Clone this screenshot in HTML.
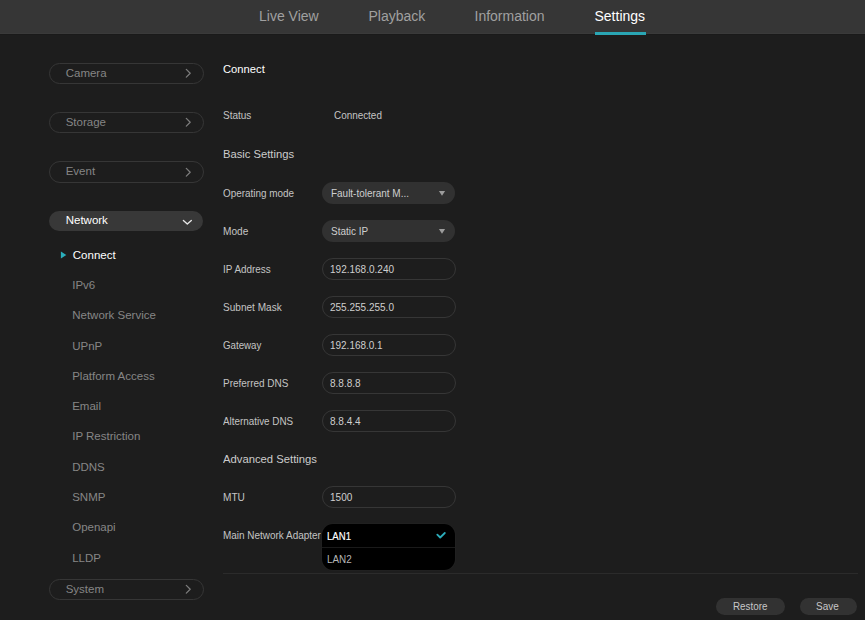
<!DOCTYPE html>
<html><head><meta charset="utf-8">
<style>
*{margin:0;padding:0;box-sizing:border-box}
html,body{width:865px;height:620px;overflow:hidden;background:#1d1d1d;font-family:"Liberation Sans",sans-serif}
.a{position:absolute}
.t{position:absolute;line-height:1;white-space:nowrap}
.pill{position:absolute;left:48.6px;width:155px;height:21.4px;border:1px solid #363636;border-radius:11px}
.sel{position:absolute;left:322px;width:133px;height:22px;background:#313131;border-radius:11px}
.inp{position:absolute;left:322px;width:134px;height:22px;border:1px solid #363636;border-radius:11px}
.btn{position:absolute;top:597.5px;height:17.5px;background:#323232;border-radius:9px}
</style></head><body>
<div class="a" style="left:0;top:0;width:865px;height:34px;background:#363636;border-bottom:1px solid #3a3a3a"></div><div class="a" style="left:0;top:34px;width:865px;height:1px;background:#1a1a1a"></div>
<div class="t" style="left:259px;top:9px;font-size:14px;color:#a0a0a0;letter-spacing:0px;font-weight:normal;">Live View</div>
<div class="t" style="left:368.5px;top:9px;font-size:14px;color:#a0a0a0;letter-spacing:0px;font-weight:normal;">Playback</div>
<div class="t" style="left:474.5px;top:9px;font-size:14px;color:#a0a0a0;letter-spacing:0px;font-weight:normal;">Information</div>
<div class="t" style="left:594.5px;top:9px;font-size:14px;color:#ffffff;letter-spacing:0px;font-weight:normal;">Settings</div>
<div class="a" style="left:595px;top:32px;width:51px;height:2.5px;background:#2aa6b4"></div>
<div class="pill" style="top:62.6px"></div>
<div class="t" style="left:65.7px;top:67.6px;font-size:11.5px;color:#858585;letter-spacing:0px;font-weight:normal;">Camera</div>
<svg class="a" style="left:185px;top:68.0px" width="10" height="12" viewBox="0 0 10 12"><path d="M1.3 1.4 L5.2 5.3 L1.3 9.1" fill="none" stroke="#7d7d7d" stroke-width="1.25" stroke-linecap="round" stroke-linejoin="round"/></svg>
<div class="pill" style="top:112px"></div>
<div class="t" style="left:65.7px;top:117px;font-size:11.5px;color:#858585;letter-spacing:0px;font-weight:normal;">Storage</div>
<svg class="a" style="left:185px;top:117.4px" width="10" height="12" viewBox="0 0 10 12"><path d="M1.3 1.4 L5.2 5.3 L1.3 9.1" fill="none" stroke="#7d7d7d" stroke-width="1.25" stroke-linecap="round" stroke-linejoin="round"/></svg>
<div class="pill" style="top:161.2px"></div>
<div class="t" style="left:65.7px;top:166.2px;font-size:11.5px;color:#858585;letter-spacing:0px;font-weight:normal;">Event</div>
<svg class="a" style="left:185px;top:166.6px" width="10" height="12" viewBox="0 0 10 12"><path d="M1.3 1.4 L5.2 5.3 L1.3 9.1" fill="none" stroke="#7d7d7d" stroke-width="1.25" stroke-linecap="round" stroke-linejoin="round"/></svg>
<div class="pill" style="top:578.9px"></div>
<div class="t" style="left:65.7px;top:583.9px;font-size:11.5px;color:#858585;letter-spacing:0px;font-weight:normal;">System</div>
<svg class="a" style="left:185px;top:584.3px" width="10" height="12" viewBox="0 0 10 12"><path d="M1.3 1.4 L5.2 5.3 L1.3 9.1" fill="none" stroke="#7d7d7d" stroke-width="1.25" stroke-linecap="round" stroke-linejoin="round"/></svg>
<div class="a" style="left:48.8px;top:210.9px;width:154.6px;height:20.6px;background:#383838;border-radius:10.3px"></div>
<div class="t" style="left:65.7px;top:215.1px;font-size:11.5px;color:#ffffff;letter-spacing:0px;font-weight:normal;">Network</div>
<svg class="a" style="left:182px;top:217px" width="11" height="9" viewBox="0 0 11 9"><path d="M1.4 3.5 L5.3 7.1 L9.3 3.5" fill="none" stroke="#e6e6e6" stroke-width="1.35" stroke-linecap="round" stroke-linejoin="round"/></svg>
<svg class="a" style="left:60px;top:250px" width="8" height="10" viewBox="0 0 8 10"><path d="M0.9 1.6 L6.3 5 L0.9 8.4 Z" fill="#2aaebb"/></svg>
<div class="t" style="left:72.8px;top:249.6px;font-size:11.5px;color:#ffffff;letter-spacing:0px;font-weight:normal;">Connect</div>
<div class="t" style="left:72.2px;top:279.9px;font-size:11.5px;color:#868686;letter-spacing:0px;font-weight:normal;">IPv6</div>
<div class="t" style="left:72.2px;top:310.2px;font-size:11.5px;color:#868686;letter-spacing:0px;font-weight:normal;">Network Service</div>
<div class="t" style="left:72.2px;top:340.5px;font-size:11.5px;color:#868686;letter-spacing:0px;font-weight:normal;">UPnP</div>
<div class="t" style="left:72.2px;top:370.8px;font-size:11.5px;color:#868686;letter-spacing:0px;font-weight:normal;">Platform Access</div>
<div class="t" style="left:72.2px;top:401.1px;font-size:11.5px;color:#868686;letter-spacing:0px;font-weight:normal;">Email</div>
<div class="t" style="left:72.2px;top:431.4px;font-size:11.5px;color:#868686;letter-spacing:0px;font-weight:normal;">IP Restriction</div>
<div class="t" style="left:72.2px;top:461.7px;font-size:11.5px;color:#868686;letter-spacing:0px;font-weight:normal;">DDNS</div>
<div class="t" style="left:72.2px;top:492.0px;font-size:11.5px;color:#868686;letter-spacing:0px;font-weight:normal;">SNMP</div>
<div class="t" style="left:72.2px;top:522.3px;font-size:11.5px;color:#868686;letter-spacing:0px;font-weight:normal;">Openapi</div>
<div class="t" style="left:72.2px;top:552.6px;font-size:11.5px;color:#868686;letter-spacing:0px;font-weight:normal;">LLDP</div>
<div class="t" style="left:222.6px;top:63.6px;font-size:11.5px;color:#ffffff;letter-spacing:0px;font-weight:normal;transform:scaleX(0.975);transform-origin:0 0;">Connect</div>
<div class="t" style="left:222.5px;top:109.8px;font-size:11px;color:#c4c4c4;letter-spacing:0px;font-weight:normal;transform:scaleX(0.91);transform-origin:0 0;">Status</div>
<div class="t" style="left:333.8px;top:109.8px;font-size:11px;color:#c4c4c4;letter-spacing:0px;font-weight:normal;transform:scaleX(0.9);transform-origin:0 0;">Connected</div>
<div class="t" style="left:222.6px;top:148.9px;font-size:11.5px;color:#cccccc;letter-spacing:0px;font-weight:normal;transform:scaleX(0.975);transform-origin:0 0;">Basic Settings</div>
<div class="t" style="left:222.6px;top:187.9px;font-size:11px;color:#c4c4c4;letter-spacing:0px;font-weight:normal;transform:scaleX(0.9);transform-origin:0 0;">Operating mode</div>
<div class="t" style="left:222.6px;top:225.9px;font-size:11px;color:#c4c4c4;letter-spacing:0px;font-weight:normal;transform:scaleX(0.92);transform-origin:0 0;">Mode</div>
<div class="t" style="left:222.6px;top:263.9px;font-size:11px;color:#c4c4c4;letter-spacing:0px;font-weight:normal;transform:scaleX(0.9);transform-origin:0 0;">IP Address</div>
<div class="t" style="left:222.6px;top:301.9px;font-size:11px;color:#c4c4c4;letter-spacing:0px;font-weight:normal;transform:scaleX(0.914);transform-origin:0 0;">Subnet Mask</div>
<div class="t" style="left:222.6px;top:339.9px;font-size:11px;color:#c4c4c4;letter-spacing:0px;font-weight:normal;transform:scaleX(0.884);transform-origin:0 0;">Gateway</div>
<div class="t" style="left:222.6px;top:377.9px;font-size:11px;color:#c4c4c4;letter-spacing:0px;font-weight:normal;transform:scaleX(0.907);transform-origin:0 0;">Preferred DNS</div>
<div class="t" style="left:222.6px;top:415.9px;font-size:11px;color:#c4c4c4;letter-spacing:0px;font-weight:normal;transform:scaleX(0.896);transform-origin:0 0;">Alternative DNS</div>
<div class="sel" style="top:182px"></div>
<div class="t" style="left:330.8px;top:188px;font-size:11px;color:#cfcfcf;letter-spacing:0px;font-weight:normal;transform:scaleX(0.904);transform-origin:0 0;">Fault-tolerant M...</div>
<svg class="a" style="left:436px;top:189px" width="12" height="10" viewBox="0 0 12 10"><path d="M2.9 1.9 L9.1 1.9 L6 6.8 Z" fill="#9c9c9c"/></svg>
<div class="sel" style="top:220px"></div>
<div class="t" style="left:330.8px;top:226px;font-size:11px;color:#cfcfcf;letter-spacing:0px;font-weight:normal;transform:scaleX(0.905);transform-origin:0 0;">Static IP</div>
<svg class="a" style="left:436px;top:227px" width="12" height="10" viewBox="0 0 12 10"><path d="M2.9 1.9 L9.1 1.9 L6 6.8 Z" fill="#9c9c9c"/></svg>
<div class="inp" style="top:258px"></div>
<div class="t" style="left:330.4px;top:263.9px;font-size:11px;color:#cfcfcf;letter-spacing:0px;font-weight:normal;transform:scaleX(0.91);transform-origin:0 0;">192.168.0.240</div>
<div class="inp" style="top:296px"></div>
<div class="t" style="left:330.4px;top:301.9px;font-size:11px;color:#cfcfcf;letter-spacing:0px;font-weight:normal;transform:scaleX(0.909);transform-origin:0 0;">255.255.255.0</div>
<div class="inp" style="top:334px"></div>
<div class="t" style="left:330.4px;top:339.9px;font-size:11px;color:#cfcfcf;letter-spacing:0px;font-weight:normal;transform:scaleX(0.905);transform-origin:0 0;">192.168.0.1</div>
<div class="inp" style="top:372px"></div>
<div class="t" style="left:330.4px;top:377.9px;font-size:11px;color:#cfcfcf;letter-spacing:0px;font-weight:normal;transform:scaleX(0.91);transform-origin:0 0;">8.8.8.8</div>
<div class="inp" style="top:410px"></div>
<div class="t" style="left:330.4px;top:415.9px;font-size:11px;color:#cfcfcf;letter-spacing:0px;font-weight:normal;transform:scaleX(0.91);transform-origin:0 0;">8.8.4.4</div>
<div class="t" style="left:222.6px;top:453.5px;font-size:11.5px;color:#cccccc;letter-spacing:0px;font-weight:normal;transform:scaleX(0.98);transform-origin:0 0;">Advanced Settings</div>
<div class="t" style="left:222.6px;top:491.9px;font-size:11px;color:#c4c4c4;letter-spacing:0px;font-weight:normal;transform:scaleX(0.92);transform-origin:0 0;">MTU</div>
<div class="inp" style="top:486px"></div>
<div class="t" style="left:330.4px;top:491.9px;font-size:11px;color:#cfcfcf;letter-spacing:0px;font-weight:normal;transform:scaleX(0.91);transform-origin:0 0;">1500</div>
<div class="t" style="left:222.6px;top:529.9px;font-size:11px;color:#c4c4c4;letter-spacing:0px;font-weight:normal;transform:scaleX(0.904);transform-origin:0 0;">Main Network Adapter</div>
<div class="a" style="left:322px;top:524.3px;width:132.8px;height:45.8px;background:#000;border-radius:11px;box-shadow:0 0 0 1px #202020"></div>
<div class="a" style="left:322px;top:546.5px;width:132.8px;height:1px;background:#1a1a1a"></div>
<div class="t" style="left:326.6px;top:531.8px;font-size:10.3px;color:#ffffff;letter-spacing:0px;font-weight:normal;transform:scaleX(0.93);transform-origin:0 0;-webkit-text-stroke:0.15px #fff">LAN1</div>
<svg class="a" style="left:434px;top:529px" width="14" height="12" viewBox="0 0 14 12"><path d="M3.3 5.6 L6.2 8.5 L10.8 4.0" fill="none" stroke="#2cadbb" stroke-width="1.8" stroke-linecap="round" stroke-linejoin="round"/></svg>
<div class="t" style="left:326.6px;top:554.8px;font-size:10.3px;color:#b5b5b5;letter-spacing:0px;font-weight:normal;transform:scaleX(0.96);transform-origin:0 0;">LAN2</div>
<div class="a" style="left:223px;top:573px;width:634.5px;height:1px;background:#2b2b2b"></div>
<div class="btn" style="left:715.5px;width:69.8px"></div>
<div class="t" style="left:733px;top:601.2px;font-size:10.5px;color:#c8c8c8;letter-spacing:0px;font-weight:normal;transform:scaleX(0.935);transform-origin:0 0;">Restore</div>
<div class="btn" style="left:799.6px;width:57.8px"></div>
<div class="t" style="left:816.4px;top:601.2px;font-size:10.5px;color:#c8c8c8;letter-spacing:0px;font-weight:normal;transform:scaleX(0.95);transform-origin:0 0;">Save</div>
</body></html>
